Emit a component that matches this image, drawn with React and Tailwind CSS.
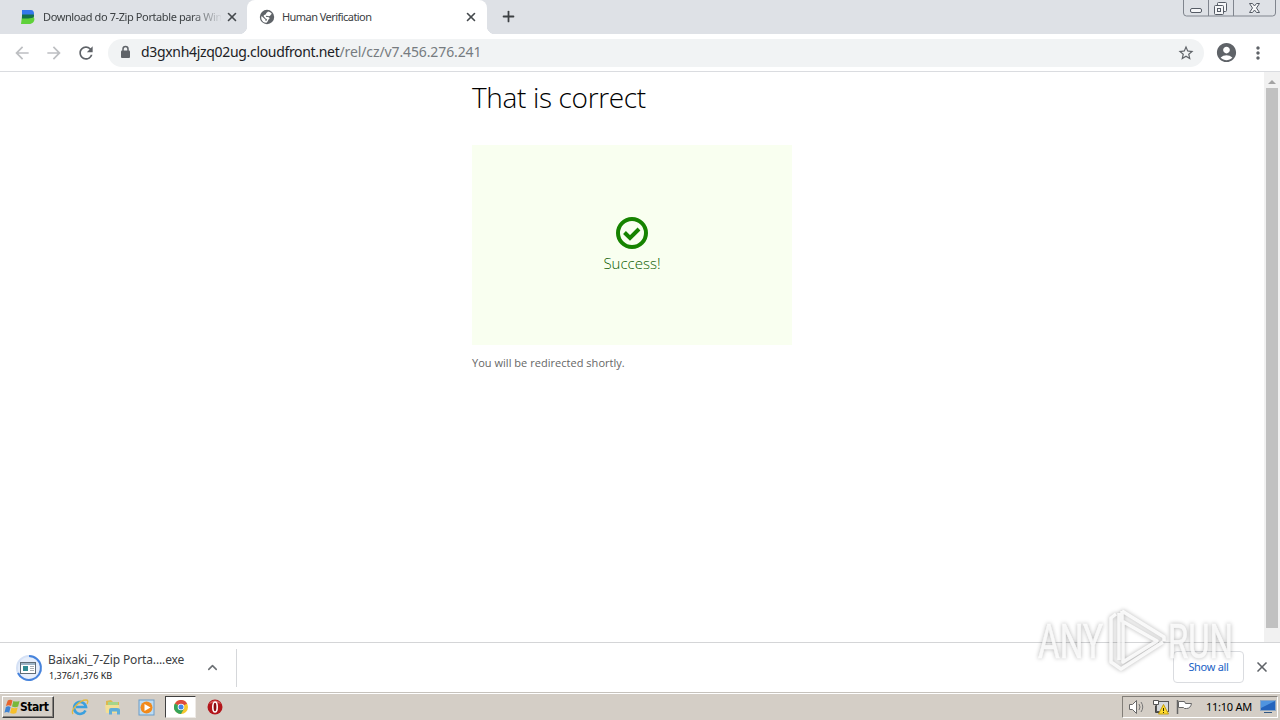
import React from 'react';
import { ChevronUp, Plus, X } from 'lucide-react';
import { MdArrowBack, MdArrowForward, MdRefresh, MdStarBorder, MdAccountCircle, MdMoreVert } from 'react-icons/md';

const Tab = ({ title, active, icon }) => (
  <div className={`relative flex items-center h-[34px] w-[240px] shrink-0 ${active ? 'bg-white rounded-t-lg pl-3' : 'pl-[13px]'}`}>
    <div className="w-4 h-4 mr-[7px] shrink-0 flex items-center justify-center">{icon}</div>
    <div className={`w-[178px] whitespace-nowrap text-[11px] leading-4 text-[#3c4043] ${active ? 'tracking-[-0.55px]' : 'tracking-[-0.4px] [mask-image:linear-gradient(to_right,black_148px,transparent_180px)]'}`}>
      {title}
    </div>
    <X size={14} strokeWidth={2.8} className="ml-[4px] shrink-0 text-[#45494d]" />
    {active && (
      <>
        <div className="absolute -left-2 bottom-0 w-2 h-2 bg-[radial-gradient(circle_at_0_0,transparent_8px,white_8.5px)]" />
        <div className="absolute -right-2 bottom-0 w-2 h-2 bg-[radial-gradient(circle_at_100%_0,transparent_8px,white_8.5px)]" />
      </>
    )}
  </div>
);

const BaixakiIcon = () => (
  <svg width="14" height="16" viewBox="0 0 14 16">
    <path d="M1 1h9c4 0 4 7 0 7H1z" fill="#3478ec" />
    <path d="M1 7h10c4 1 3 8-3 8H0z" fill="#5fd13a" />
    <path d="M1 5.500h12v2c-1 2-6 2-12 2z" fill="#14704a" />
  </svg>
);

const GlobeIcon = () => (
  <svg width="16" height="16" viewBox="0 0 16 16">
    <circle cx="8" cy="8" r="7.200" fill="#5f6368" />
    <path d="M9 2.500q2.500 0 4 2.500-1 0-1.500 1.200Q10.500 7.500 9 7q-1-.2-2-.2-.5 1 .5 1.200 2.500-.5 3 1 .2 1-1 1.500-.5 2-2 3.300Q4 14 2.400 10.300 2 8 2.600 7L5.500 9.800q1 .2 1 1.200v1q1.200 0 1.500-1.200-.2-1-1.500-1.300L4.500 7q.3-1.500 2-1.500 1-.8.700-1.500.8-.5 1.800-1.500z" fill="white" />
  </svg>
);

const LockIcon = () => (
  <svg width="15" height="15" viewBox="0 0 15 15">
    <path d="M5 6V4q0-2.500 2.500-2.500T10 4v2" fill="none" stroke="#5f6368" strokeWidth="1.500" />
    <rect x="3" y="5.500" width="9" height="7.500" rx="1" fill="#5f6368" />
  </svg>
);

const WindowControls = () => (
  <svg className="absolute right-[3px] top-0" width="95" height="18" viewBox="0 0 95 18" fill="none">
    <path d="M1.500 0v13q0 3 3 3h86q3 0 3-3V0" stroke="#80858e" />
    <path d="M26.500 0v16M51.500 0v16" stroke="#80858e" />
    <g stroke="#555b65" fill="#f5f6f8">
      <rect x="8.500" y="8.500" width="11" height="4" rx="1.500" />
      <rect x="35.500" y="2.500" width="9" height="9" rx="1" />
      <rect x="32.500" y="5.500" width="9" height="9" rx="1" />
      <rect x="35.500" y="8.500" width="3" height="3" />
      <path d="M67.500 3.500h3l2 2.500 2-2.500h3l-3 4.500 3 4.500h-3l-2-2.500-2 2.500h-3l3-4.500z" />
    </g>
  </svg>
);

const Toolbar = () => (
  <div className="flex items-center h-[38px] bg-white border-b border-[#dadce0] shrink-0 text-[#5f6368]">
    <MdArrowBack size={20} className="ml-3 text-[#bdbfc2]" />
    <MdArrowForward size={20} className="ml-3 text-[#bdbfc2]" />
    <MdRefresh size={20} className="ml-3" />
    <div className="flex items-center ml-3 w-[1096px] h-7 rounded-full bg-[#f1f3f4] pl-[10px] pr-[9px]">
      <LockIcon />
      <div className="ml-[8px] mb-[2px] text-[14px] leading-5 whitespace-nowrap text-[#767b80]">
        <span className="text-[#202124] tracking-[-0.32px]">d3gxnh4jzq02ug.cloudfront.net</span>
        <span className="tracking-[-0.11px]">/rel/cz/v7.456.276.241</span>
      </div>
      <MdStarBorder size={18} className="ml-auto" />
    </div>
    <MdAccountCircle size={23} className="ml-[11px]" />
    <MdMoreVert size={20} className="ml-[10px]" />
  </div>
);

const Scrollbar = () => (
  <div className="flex flex-col items-center w-4 bg-[#f1f1f1]">
    <div className="flex h-4 pt-[2px] items-center justify-center">
      <svg width="8" height="5" viewBox="0 0 8 5"><path d="M0 5l4-4 4 4z" fill="#a3a3a3" /></svg>
    </div>
    <div className="w-3 h-[540px] bg-[#c1c1c1]" />
  </div>
);

const DownloadBar = () => (
  <div className="flex items-center h-[50px] bg-white border-t border-[#d4d5d7] shrink-0">
    <svg className="ml-[15px] shrink-0" width="28" height="28" viewBox="0 0 28 28">
      <circle cx="14" cy="14" r="12" fill="#e6eefb" stroke="#d5e1f5" strokeWidth="2" />
      <path d="M14 2a12 12 0 1 1-11 17" fill="none" stroke="#4683dc" strokeWidth="2" />
      <rect x="5.500" y="8.500" width="15" height="11" fill="white" stroke="#5f6c76" />
      <path d="M6 9h14v2H6z" fill="#9db4c6" />
      <path d="M8 12h5v5H8z" fill="#2f8a92" />
      <path d="M15 12.500h4M15 14.500h4M15 16.500h4" stroke="#a7adb2" />
    </svg>
    <div className="ml-[5px] w-[150px] whitespace-nowrap">
      <div className="text-[12px] leading-4 tracking-[-0.13px] text-[#3c4043]">Baixaki_7-Zip Porta....exe</div>
      <div className="pl-px text-[9px] leading-4 text-[#202124]">1,376/1,376 KB</div>
    </div>
    <ChevronUp size={15} strokeWidth={2.5} className="ml-[7px] text-[#6c7074]" />
    <div className="ml-4 h-[38px] w-px bg-[#d5d7da]" />
    <button className="ml-auto mb-px h-8 w-[71px] rounded border border-[#dadce0] text-[11px] tracking-[-0.3px] text-[#1a62c5]">Show all</button>
    <X size={16} strokeWidth={2.5} className="ml-[10px] mr-[10px] mb-px text-[#5f6368]" />
  </div>
);

const Watermark = () => (
  <svg className="absolute left-[1030px] top-[603px] drop-shadow-[0_0_2px_rgba(0,0,0,0.35)]" width="210" height="75" viewBox="0 0 210 75">
    <g fill="white" stroke="white" strokeWidth="0.6" opacity="0.85" fontFamily="Roboto, sans-serif" fontSize="49">
      <text x="8" y="55" textLength="65" lengthAdjust="spacingAndGlyphs">ANY</text>
      <text x="138" y="55" textLength="65" lengthAdjust="spacingAndGlyphs">RUN</text>
    </g>
    <g fill="none" stroke="white" strokeOpacity="0.85" strokeWidth="3.500" strokeLinejoin="round">
      <path d="M86 11l-5 4v44l10 7 42-27" />
      <path d="M89 10v47" />
      <path d="M92 8l42 26v4M92 8v10l35 20-34 21v-41" />
    </g>
  </svg>
);

const WindowsLogo = () => (
  <svg className="shrink-0" width="16" height="16" viewBox="0 0 17 16">
    <path d="M4 1q2.500-1.500 5 0L7.500 7q-2.500-1.500-5.500 0z" fill="#e8642b" />
    <path d="M10 1.500q3 1.500 6.500 0L15 7.500q-3 1.500-6.500 0z" fill="#78b83a" />
    <path d="M2 8q2.500-1.500 5 0l-1.500 6q-2.500-1.500-5 0z" fill="#3f83d3" />
    <path d="M8 8.500q3 1.500 6.500 0l-1.500 6q-3 1.500-6.500 0z" fill="#f6bf2b" />
  </svg>
);

const ExplorerIcon = () => (
  <svg width="18" height="18" viewBox="0 0 18 18" fill="none">
    <path d="M14.500 12.500A6 6 0 1 1 15 9H5" stroke="#3ba0de" strokeWidth="2.600" />
    <path d="M2 16C-1 12 9 2 15 2q3 0 1 4" stroke="#e3b93f" strokeWidth="1.300" />
  </svg>
);

const FolderIcon = () => (
  <svg width="18" height="18" viewBox="0 0 18 18">
    <path d="M2 3l5-1 2 2h6v10H2z" fill="#dcb94f" />
    <path d="M4 4h10v5H4z" fill="#a5d58a" />
    <path d="M1 7h14l1 8H2z" fill="#f3df94" />
    <path d="M5 16.500V12q0-2 2-2h6q3 0 3 2v4.500h-3v-3H8v3z" fill="#5fadd8" />
  </svg>
);

const PlayerIcon = () => (
  <svg width="17" height="17" viewBox="0 0 17 17">
    <rect x="1" y="1" width="15" height="15" fill="#bddcf3" stroke="#6a9cc8" />
    <circle cx="8.500" cy="8.500" r="6" fill="#f18a1c" />
    <path d="M6.500 5l6 3.500-6 3.500z" fill="white" />
  </svg>
);

const ChromeIcon = () => (
  <svg width="14" height="14" viewBox="0 0 14 14">
    <circle cx="7" cy="7" r="7" fill="#f6c72d" />
    <path d="M7 7L.9 3.500A7 7 0 0 1 13.100 3.500z" fill="#dd4b3e" />
    <path d="M7 7L.9 3.500A7 7 0 0 0 7 14l3-5.200z" fill="#35a35a" />
    <circle cx="7" cy="7" r="3.300" fill="white" />
    <circle cx="7" cy="7" r="2.500" fill="#4486e8" />
  </svg>
);

const OperaIcon = () => (
  <svg width="16" height="16" viewBox="0 0 16 16">
    <circle cx="8" cy="8" r="7.500" fill="#b3161b" />
    <path d="M2 5a7 7 0 0 1 12 0q-6-3-12 0z" fill="#d9585a" />
    <ellipse cx="8" cy="8" rx="2.200" ry="5" fill="#8c0a10" stroke="white" strokeWidth="1.600" />
  </svg>
);

const TrayIcons = () => (
  <svg width="66" height="18" viewBox="0 0 66 18" fill="none">
    <path d="M1.500 6.500h3l4-4v13l-4-4h-3z" fill="white" stroke="#686868" />
    <path d="M11 6q2 3 0 6M13 4q3.500 5 0 10" stroke="#777" />
    <rect x="28.500" y="3.500" width="12" height="10" fill="#d5d9dc" stroke="#555" />
    <path d="M27.500 7.500v7h5" stroke="#444" />
    <path d="M25.500 2.500h5v4h-5z" fill="white" stroke="#555" />
    <path d="M35.500 6.500l5 9.500h-10z" fill="#ffdb2d" stroke="#c39e12" />
    <path d="M35.500 10v3M35.500 14v1" stroke="#302800" />
    <path d="M49.500 2v14" stroke="#666" strokeWidth="1.500" />
    <path d="M50.500 3.500h6l1 2h6q-1 5-5 5h-2l-1-1h-5z" fill="white" stroke="#666" />
  </svg>
);

const Taskbar = () => (
  <div className="flex items-center h-[28px] bg-[#d4cec6] border-t border-[#c6c2bc] shadow-[inset_0_1px_0_white] shrink-0">
    <button className="flex items-center ml-[2px] mt-px h-[22px] w-[52px] pl-px border border-t-white border-l-white border-r-[#404040] border-b-[#404040] shadow-[inset_-1px_-1px_0_#87837e] font-['DejaVu_Sans_Condensed','DejaVu_Sans',sans-serif] text-[12px] font-bold tracking-[-0.45px] text-black">
      <WindowsLogo />
      Start
    </button>
    <div className="flex items-center ml-[17px] mt-px">
      <ExplorerIcon />
      <div className="ml-[15px]"><FolderIcon /></div>
      <div className="ml-[16px]"><PlayerIcon /></div>
      <div className="flex items-center justify-center ml-[10px] w-[31px] h-[22px] bg-white border border-t-[#404040] border-l-[#404040] border-[#eeeae6]">
        <ChromeIcon />
      </div>
      <div className="ml-[11px]"><OperaIcon /></div>
    </div>
    <div className="flex items-center ml-auto mr-[2px] mt-px w-[156px] h-[22px] pl-[5px] border border-t-[#827e78] border-l-[#827e78] border-b-white border-r-white">
      <TrayIcons />
      <span className="ml-[12px] w-[48px] whitespace-nowrap text-[11px] tracking-[-0.24px] text-black">11:10 AM</span>
      <svg className="ml-[6px] shrink-0" width="16" height="14" viewBox="0 0 16 14">
        <rect x="0.500" y="0.500" width="15" height="10" fill="#2464bd" stroke="#8ba6c5" />
        <path d="M1 1h14L1 8z" fill="#4f94df" />
        <path d="M4 12h8v1H4z" fill="#315782" />
      </svg>
    </div>
  </div>
);

const App = () => (
  <div className="relative flex flex-col w-[1280px] h-[720px] overflow-hidden bg-white font-['Noto_Sans',sans-serif]">
    <div className="flex h-[34px] bg-[#dee1e6] shrink-0 pl-[7px]">
      <Tab title="Download do 7-Zip Portable para Win" icon={<BaixakiIcon />} />
      <Tab active title="Human Verification" icon={<GlobeIcon />} />
      <Plus size={17} strokeWidth={2.5} className="ml-[13px] mt-[8px] text-[#3c4043]" />
    </div>
    <WindowControls />
    <Toolbar />
    <div className="flex flex-1">
      <main className="flex-1 pl-[472px] font-['Open_Sans',sans-serif]">
        <h1 className="mt-[5px] h-[68px] text-[28px] leading-10 font-light tracking-[-0.34px] text-black">That is correct</h1>
        <div className="flex flex-col items-center w-80 h-[200px] pt-[71px] bg-[#f9fff0] text-[#168300]">
          <svg width="34" height="34" viewBox="0 0 34 34" fill="none" stroke="#168300">
            <circle cx="17" cy="17" r="14" strokeWidth="4" />
            <path d="M9.500 16.500l5.500 5.500 9-9" strokeWidth="4" />
          </svg>
          <p className="mt-px text-[15px] leading-6 font-light text-[#0b5c00]">Success!</p>
        </div>
        <p className="mt-2 text-[11px] leading-5 tracking-[0.03px] text-[#666]">You will be redirected shortly.</p>
      </main>
      <Scrollbar />
    </div>
    <DownloadBar />
    <Taskbar />
    <Watermark />
  </div>
);

export default App;
